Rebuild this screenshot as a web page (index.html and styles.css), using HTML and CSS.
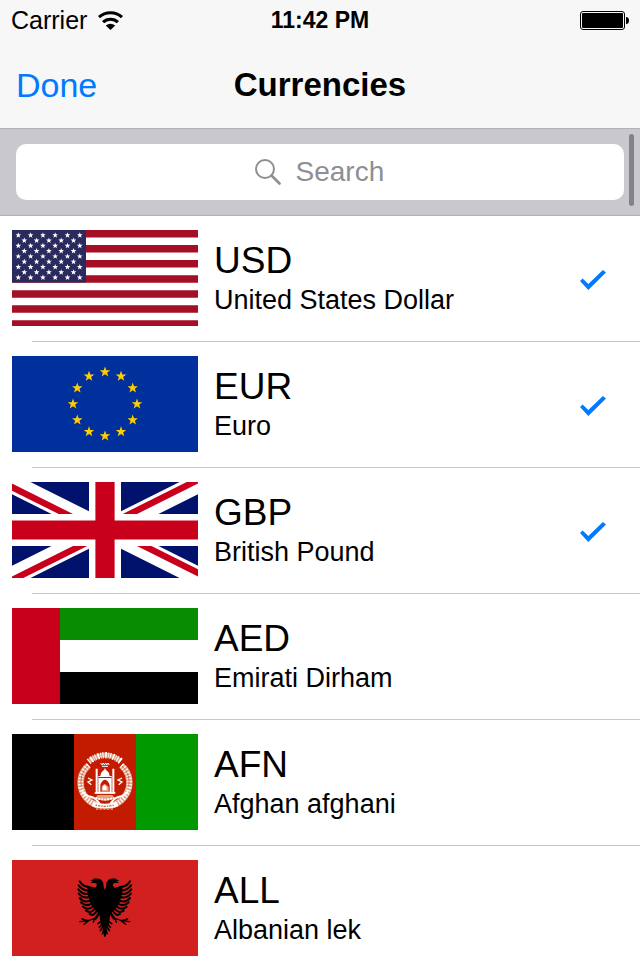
FILE: index.html
```html
<!DOCTYPE html>
<html lang="en">
<head>
    <meta charset="utf-8">
    <meta name="viewport" content="width=device-width, initial-scale=1">
    <title>Currencies</title>
    <link rel="stylesheet" href="styles.css">
</head>
<body>
    <!-- shared shapes -->
    <svg class="defs" aria-hidden="true">
        <defs>
            <symbol id="star" viewBox="-10 -10 20 20" overflow="visible">
                <path d="M0-10 2.4-3.3H9.5L3.9 1.3 6 8.1 0 4-6 8.1-3.9 1.3-9.5-3.3H-2.4z"/>
            </symbol>
            <g id="stars5">
                <use href="#star" x="9.300" y="-3" width="6" height="6"/>
                <use href="#star" x="21.600" y="-3" width="6" height="6"/>
                <use href="#star" x="33.900" y="-3" width="6" height="6"/>
                <use href="#star" x="46.200" y="-3" width="6" height="6"/>
                <use href="#star" x="58.500" y="-3" width="6" height="6"/>
            </g>
            <g id="stars6">
                <use href="#stars5" x="-6"/>
                <use href="#star" x="64.800" y="-3" width="6" height="6"/>
            </g>
            <g id="eagle-half">
                <path d="M135 106 131 96 130 84Q123 69 108 71L103 69 103 73 90 76 99 79 91 84 106 84Q115 90 106 98L94 95 82 92 82 112 90 142 103 163 118 178 122 206 135 228z"/>
                <g fill="none" stroke="#000" stroke-width="6" stroke-linecap="round">
                    <path d="M88 96Q68 96 59 79M88 106Q68 108 56 91M88 116Q68 120 55 103M90 126Q70 132 56 116M92 136Q72 145 59 129M96 145Q78 157 63 142M101 152Q86 169 69 155M106 158Q94 178 78 167M112 164Q102 186 89 177"/>
                    <path stroke-width="8" d="M118 174 107 190"/>
                    <path stroke-width="4" d="M106 190 84 197 66 192M84 197 60 200M88 196 72 208M104 192 100 202"/>
                    <path stroke-width="5" d="M128 196 114 206M129 204 118 217M130 212 121 227M132 218 128 236M134 216V242"/>
                </g>
            </g>
            <g id="wreath-half" fill="none">
                <path stroke="#e2a488" stroke-width="19" d="M86 106Q56 132 63 172 72 211 112 226"/>
                <path stroke="#fff" stroke-width="15" stroke-dasharray="4 5" d="M86 106Q56 132 63 172 72 211 112 226"/>
                <path stroke="#c8492c" stroke-width="2" d="M84 108Q57 134 64 170"/>
                <path stroke="#fff" stroke-width="6" d="M66 184Q78 198 92 200T120 222"/>
                <path stroke="#fff" stroke-width="4" d="M84 144 96 150 84 156 94 164"/>
            </g>
        </defs>
    </svg>

    <div class="screen">
        <header class="header">
            <div class="status-bar">
                <div class="carrier">
                    <span>Carrier</span>
                    <svg class="wifi" viewBox="0 0 74 56" aria-label="Wi-Fi">
                        <path d="M3 18Q17 5 37 5T71 18M15 33Q24 24 37 24T59 33" fill="none" stroke="#000" stroke-width="9"/>
                        <path d="M23 43Q37 32 51 43L37 56z"/>
                    </svg>
                </div>
                <div class="time">11:42 PM</div>
                <svg class="battery" viewBox="0 0 49 19" aria-label="Battery full">
                    <rect x=".5" y=".5" width="44" height="18" rx="2.5" fill="none" stroke="#000"/>
                    <rect x="2" y="2" width="41" height="15" rx="1"/>
                    <path d="M46 6Q49 6 49 9.500T46 13z"/>
                </svg>
            </div>
            <nav class="nav-bar">
                <button class="done" type="button">Done</button>
                <h1>Currencies</h1>
            </nav>
        </header>

        <main class="content">
            <div class="search-bar">
                <label class="search-field">
                    <svg class="search-icon" viewBox="0 0 26 26" fill="none" stroke="#8e8e93" aria-hidden="true">
                        <circle cx="10" cy="10" r="9" stroke-width="2"/>
                        <path d="M16.500 16.500 24.500 24.500" stroke-width="2.600" stroke-linecap="round"/>
                    </svg>
                    <input class="search-input" type="text" placeholder="Search" aria-label="Search">
                </label>
            </div>

            <ul class="currency-list">
                <li>
                    <label class="currency">
                        <svg class="flag" viewBox="0 0 186 96" aria-hidden="true">
                            <path fill="#fff" d="M0 0h186v96H0z"/>
                            <path stroke="#a50f25" stroke-width="7.500" d="M0 3.750h186M0 18.800h186M0 33.850h186M0 48.900h186M0 63.950h186M0 79h186M0 94.050h186"/>
                            <path fill="#2b2a5e" d="M0 0h74v52.600H0z"/>
                            <g fill="#fff">
                                <use href="#stars6" y="5.200"/>
                                <use href="#stars5" y="10.500"/>
                                <use href="#stars6" y="15.800"/>
                                <use href="#stars5" y="21.100"/>
                                <use href="#stars6" y="26.400"/>
                                <use href="#stars5" y="31.700"/>
                                <use href="#stars6" y="37"/>
                                <use href="#stars5" y="42.300"/>
                                <use href="#stars6" y="47.600"/>
                            </g>
                        </svg>
                        <span class="names">
                            <span class="code">USD</span>
                            <span class="name">United States Dollar</span>
                        </span>
                        <input class="check" type="checkbox" checked>
                    </label>
                </li>
                <li>
                    <label class="currency">
                        <svg class="flag" viewBox="0 0 186 96" aria-hidden="true">
                            <path fill="#00309c" d="M0 0h186v96H0z"/>
                            <g fill="#fc0">
                                <use href="#star" x="87.500" y="10.500" width="11" height="11"/>
                                <use href="#star" x="103.500" y="14.800" width="11" height="11"/>
                                <use href="#star" x="115.200" y="26.500" width="11" height="11"/>
                                <use href="#star" x="119.500" y="42.500" width="11" height="11"/>
                                <use href="#star" x="115.200" y="58.500" width="11" height="11"/>
                                <use href="#star" x="103.500" y="70.200" width="11" height="11"/>
                                <use href="#star" x="87.500" y="74.500" width="11" height="11"/>
                                <use href="#star" x="71.500" y="70.200" width="11" height="11"/>
                                <use href="#star" x="59.800" y="58.500" width="11" height="11"/>
                                <use href="#star" x="55.500" y="42.500" width="11" height="11"/>
                                <use href="#star" x="59.800" y="26.500" width="11" height="11"/>
                                <use href="#star" x="71.500" y="14.800" width="11" height="11"/>
                            </g>
                        </svg>
                        <span class="names">
                            <span class="code">EUR</span>
                            <span class="name">Euro</span>
                        </span>
                        <input class="check" type="checkbox" checked>
                    </label>
                </li>
                <li>
                    <label class="currency">
                        <svg class="flag" viewBox="3 0 186 96" aria-hidden="true">
                            <clipPath id="gb-red">
                                <path d="M96 48h96v48zM96 48v48H0zM96 48H0V0zM96 48V0h96z"/>
                            </clipPath>
                            <path fill="#00126b" d="M0 0h192v96H0z"/>
                            <path stroke="#fff" stroke-width="19.200" d="M0 0 192 96M192 0 0 96"/>
                            <path stroke="#c8001c" stroke-width="12.800" clip-path="url(#gb-red)" d="M0 0 192 96M192 0 0 96"/>
                            <path stroke="#fff" stroke-width="32" d="M96 0v96M0 48h192"/>
                            <path stroke="#c8001c" stroke-width="19.200" d="M96 0v96M0 48h192"/>
                        </svg>
                        <span class="names">
                            <span class="code">GBP</span>
                            <span class="name">British Pound</span>
                        </span>
                        <input class="check" type="checkbox" checked>
                    </label>
                </li>
                <li>
                    <label class="currency">
                        <svg class="flag" viewBox="0 0 186 96" aria-hidden="true">
                            <path fill="#fff" d="M0 0h186v96H0z"/>
                            <path fill="#088c00" d="M48 0h138v32H48z"/>
                            <path d="M48 64h138v32H48z"/>
                            <path fill="#c8001c" d="M0 0h48v96H0z"/>
                        </svg>
                        <span class="names">
                            <span class="code">AED</span>
                            <span class="name">Emirati Dirham</span>
                        </span>
                        <input class="check" type="checkbox">
                    </label>
                </li>
                <li>
                    <label class="currency">
                        <svg class="flag" viewBox="0 0 558 288" aria-hidden="true">
                            <path d="M0 0h186v288H0z"/>
                            <path fill="#c31b00" d="M186 0h186v288H186z"/>
                            <path fill="#090" d="M372 0h186v288H372z"/>
                            <g transform="translate(144 -12)">
                                <use href="#wreath-half"/>
                                <use href="#wreath-half" transform="matrix(-1 0 0 1 270 0)"/>
                                <!-- inscription and sun rays -->
                                <g fill="none" stroke="#fff">
                                    <path stroke="#e2a488" stroke-width="15" d="M88 93Q135 57 182 93"/>
                                    <path stroke-width="19" stroke-dasharray="3 5 5 4 2 4" d="M86 95Q135 56 184 95"/>
                                    <path stroke-width="3" d="M122 99l4 6 4-6 3 6 4-6 3 6 4-6 4 6M126 109h18"/>
                                </g>
                                <!-- mosque -->
                                <path fill="#fff" d="M115 190v-52h6q1-12 11-18l3-6 3 6q10 6 11 18h6v52z"/>
                                <path fill="#c31b00" d="M115 141h40v3h-40zM121 185v-20q4-14 14-16 10 2 14 16v20z"/>
                                <path fill="#e2a488" d="M125 185v-16l8-7 6 2 7 8v13z"/>
                                <path fill="#fff" d="M128 180v-10l6-5 6 7v8z"/>
                                <path fill="none" stroke="#fff" stroke-width="6" d="M110 116v74M160 116v74"/>
                                <path fill="none" stroke="#fff" stroke-width="5" d="M104 189h62"/>
                                <path fill="#e2a488" d="M112 195h46l6 12-29 6-29-6z"/>
                                <path fill="none" stroke="#fff" stroke-width="5" stroke-dasharray="6 3" d="M106 203Q135 214 164 203"/>
                                <!-- ribbon -->
                                <path fill="#fff" d="M100 215q35 12 70 0l4 14q-39 15-78 0z"/>
                                <path fill="none" stroke="#d4654a" stroke-width="4" stroke-dasharray="4 3 7 3" d="M107 225q28 8 56 0"/>
                                <path fill="none" stroke="#e2a488" stroke-width="5" stroke-dasharray="7 4" d="M108 237h54"/>
                            </g>
                        </svg>
                        <span class="names">
                            <span class="code">AFN</span>
                            <span class="name">Afghan afghani</span>
                        </span>
                        <input class="check" type="checkbox">
                    </label>
                </li>
                <li>
                    <label class="currency">
                        <svg class="flag" viewBox="0 0 558 288" aria-hidden="true">
                            <path fill="#d21f1f" d="M0 0h558v288H0z"/>
                            <g transform="translate(144 -15)">
                                <use href="#eagle-half"/>
                                <use href="#eagle-half" transform="matrix(-1 0 0 1 269 0)"/>
                            </g>
                        </svg>
                        <span class="names">
                            <span class="code">ALL</span>
                            <span class="name">Albanian lek</span>
                        </span>
                        <input class="check" type="checkbox">
                    </label>
                </li>
            </ul>
            <div class="scroll-indicator"></div>
        </main>
    </div>
</body>
</html>
```

FILE: styles.css
```css
* {
    box-sizing: border-box;
}
body {
    margin: 0;
    font-family: "Liberation Sans", Arial, sans-serif;
    color: #000;
    background-color: #fff;
}
.defs {
    display: block;
    width: 0;
    height: 0;
}
.screen {
    display: flex;
    flex-direction: column;
    height: 100vh;
    overflow: hidden;
}

/* header */
.header {
    background-color: #f7f7f7;
}
.status-bar {
    display: grid;
    grid-template-columns: 1fr auto 1fr;
    align-items: center;
    height: 41px;
    padding: 0 11px;
}
.carrier {
    display: flex;
    align-items: center;
    gap: 11px;
    font-size: 25px;
}
.wifi {
    width: 25px;
    height: 19px;
}
.time {
    font-size: 23px;
    font-weight: bold;
}
.battery {
    justify-self: end;
    width: 49px;
    height: 19px;
}
.nav-bar {
    display: grid;
    grid-template-columns: 1fr auto 1fr;
    align-items: center;
    height: 87px;
    padding: 0 16px;
}
.nav-bar h1 {
    margin: 0;
    font-size: 33px;
    line-height: 40px;
}
.done {
    justify-self: start;
    padding: 0;
    border: 0;
    background: none;
    font-family: inherit;
    font-size: 34px;
    line-height: 40px;
    color: #007aff;
}

/* search */
.content {
    position: relative;
    flex: 1;
    min-height: 0;
    overflow-y: auto;
    scrollbar-width: none;
}
.search-bar {
    padding: 15px 16px;
    border-top: 1px solid #b2b2b6;
    border-bottom: 1px solid #b2b2b6;
    background-color: #c9c8ce;
}
.search-field {
    display: flex;
    align-items: center;
    justify-content: center;
    gap: 15px;
    height: 56px;
    border-radius: 10px;
    background-color: #fff;
}
.search-icon {
    width: 26px;
    height: 26px;
}
.search-input {
    width: 90px;
    padding: 0;
    border: 0;
    outline: 0;
    background: none;
    font-family: inherit;
    font-size: 28px;
    line-height: 32px;
}
.search-input::placeholder {
    color: #8e8e93;
    opacity: 1;
}
.scroll-indicator {
    position: absolute;
    top: 6px;
    right: 6px;
    width: 5px;
    height: 72px;
    border-radius: 3px;
    background-color: #838385;
}

/* list */
.currency-list {
    margin: 0;
    padding: 0;
    list-style: none;
}
.currency-list li::after {
    content: "";
    display: block;
    height: 1px;
    margin-left: 32px;
    background-color: #c8c7cc;
}
.currency {
    display: flex;
    align-items: center;
    padding: 14px 34px 15px 12px;
}
.flag {
    flex: none;
    width: 186px;
    height: 96px;
    margin-right: 16px;
}
.names {
    display: flex;
    flex: 1;
    flex-direction: column;
}
.code {
    font-size: 37px;
    line-height: 44px;
}
.name {
    font-size: 27px;
    line-height: 34px;
}
.check {
    appearance: none;
    width: 26px;
    height: 20px;
    margin: 4px 0 0;
}
.check:checked {
    background-color: #007aff;
    clip-path: polygon(0 55%, 10% 43%, 32% 70%, 88% 0, 100% 12%, 32% 100%);
}
```
